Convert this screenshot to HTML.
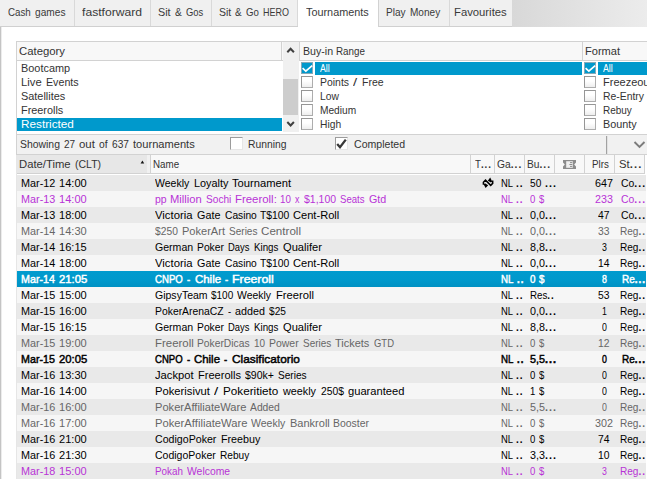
<!DOCTYPE html>
<html><head><meta charset="utf-8"><title>Tournaments</title>
<style>
html,body{margin:0;padding:0;background:#fff;}
body{width:647px;height:479px;overflow:hidden;position:relative;font-family:"Liberation Sans", sans-serif;font-size:11px;}
#app{position:absolute;left:0;top:0;width:647px;height:479px;overflow:hidden;}
#app div,#app svg{position:absolute;}
#app p{margin:0;position:absolute;left:0;top:0;width:0;height:0;}
#app span{position:absolute;white-space:nowrap;line-height:14px;height:14px;transform-origin:0 0;}
#app span.b{-webkit-text-stroke:0.45px currentColor;}
#app span i{font-style:normal;font-weight:bold;letter-spacing:1.1px;}
</style></head><body><div id="app">
<div style="left:512px;top:0px;width:135px;height:27px;background:linear-gradient(90deg,#d8d8d8 0%,#ececec 100%);"></div>
<div style="left:0px;top:27px;width:647px;height:452px;background:#fff;"></div>
<div style="left:0px;top:0px;width:74px;height:26px;background:#f0f0f0;"></div>
<div style="left:74px;top:0px;width:1px;height:26px;background:#d9d9d9;"></div>
<div style="left:0px;top:26px;width:75px;height:1px;background:#d0d0d0;"></div>
<div style="left:75px;top:0px;width:75px;height:26px;background:#f0f0f0;"></div>
<div style="left:150px;top:0px;width:1px;height:26px;background:#d9d9d9;"></div>
<div style="left:75px;top:26px;width:76px;height:1px;background:#d0d0d0;"></div>
<div style="left:151px;top:0px;width:60px;height:26px;background:#f0f0f0;"></div>
<div style="left:211px;top:0px;width:1px;height:26px;background:#d9d9d9;"></div>
<div style="left:151px;top:26px;width:61px;height:1px;background:#d0d0d0;"></div>
<div style="left:212px;top:0px;width:85px;height:26px;background:#f0f0f0;"></div>
<div style="left:297px;top:0px;width:1px;height:26px;background:#d9d9d9;"></div>
<div style="left:212px;top:26px;width:86px;height:1px;background:#d0d0d0;"></div>
<div style="left:298px;top:0px;width:80px;height:27px;background:#fff;"></div>
<div style="left:379px;top:0px;width:70px;height:26px;background:#f0f0f0;"></div>
<div style="left:449px;top:0px;width:1px;height:26px;background:#d9d9d9;"></div>
<div style="left:379px;top:26px;width:71px;height:1px;background:#d0d0d0;"></div>
<div style="left:450px;top:0px;width:62px;height:26px;background:#f0f0f0;"></div>
<div style="left:450px;top:26px;width:62px;height:1px;background:#d0d0d0;"></div>
<div style="left:378px;top:0px;width:1px;height:27px;background:#d2d2d2;"></div>
<div style="left:0px;top:27px;width:1px;height:452px;background:#c4c4c4;"></div>
<div style="left:1px;top:27px;width:1px;height:452px;background:#ececec;"></div>
<div style="left:16px;top:41px;width:631px;height:1px;background:#d2d2d2;"></div>
<div style="left:16px;top:41px;width:1px;height:114px;background:#d2d2d2;"></div>
<div style="left:16px;top:155px;width:1px;height:324px;background:#e6e6e6;"></div>
<div style="left:17px;top:42px;width:630px;height:18px;background:#f8f8f8;"></div>
<div style="left:17px;top:60px;width:630px;height:1px;background:#d2d2d2;"></div>
<div style="left:281px;top:42px;width:1px;height:19px;background:#d2d2d2;"></div>
<div style="left:283px;top:42px;width:16px;height:90px;background:#f0f0f0;"></div>
<div style="left:283px;top:79px;width:15px;height:36px;background:#cdcdcd;"></div>
<div style="left:299px;top:42px;width:1px;height:19px;background:#d2d2d2;"></div>
<div style="left:582px;top:42px;width:1px;height:19px;background:#d2d2d2;"></div>
<div style="left:17px;top:118px;width:265px;height:13px;background:#0099cc;"></div>
<div style="left:315px;top:62px;width:267px;height:13px;background:#0099cc;"></div>
<div style="left:301px;top:62px;width:12px;height:12px;background:#0099cc;box-sizing:border-box;border:1px solid #86a9b8"></div>
<svg style="left:301px;top:62px" width="12" height="12" viewBox="0 0 12 12"><path d="M1.6 6.2 L4.8 9.1 L11.2 3.7" fill="none" stroke="#fff" stroke-width="1.7"/></svg>
<div style="left:301px;top:76px;width:12px;height:12px;background:linear-gradient(#fff 40%,#eee);box-sizing:border-box;border:1px solid #969696;border-right-color:#adadad;border-bottom-color:#adadad"></div>
<div style="left:301px;top:90px;width:12px;height:12px;background:linear-gradient(#fff 40%,#eee);box-sizing:border-box;border:1px solid #969696;border-right-color:#adadad;border-bottom-color:#adadad"></div>
<div style="left:301px;top:104px;width:12px;height:12px;background:linear-gradient(#fff 40%,#eee);box-sizing:border-box;border:1px solid #969696;border-right-color:#adadad;border-bottom-color:#adadad"></div>
<div style="left:301px;top:118px;width:12px;height:12px;background:linear-gradient(#fff 40%,#eee);box-sizing:border-box;border:1px solid #969696;border-right-color:#adadad;border-bottom-color:#adadad"></div>
<div style="left:598px;top:62px;width:49px;height:13px;background:#0099cc;"></div>
<div style="left:584px;top:62px;width:12px;height:12px;background:#0099cc;box-sizing:border-box;border:1px solid #86a9b8"></div>
<svg style="left:584px;top:62px" width="12" height="12" viewBox="0 0 12 12"><path d="M1.6 6.2 L4.8 9.1 L11.2 3.7" fill="none" stroke="#fff" stroke-width="1.7"/></svg>
<div style="left:584px;top:76px;width:12px;height:12px;background:linear-gradient(#fff 40%,#eee);box-sizing:border-box;border:1px solid #969696;border-right-color:#adadad;border-bottom-color:#adadad"></div>
<div style="left:584px;top:90px;width:12px;height:12px;background:linear-gradient(#fff 40%,#eee);box-sizing:border-box;border:1px solid #969696;border-right-color:#adadad;border-bottom-color:#adadad"></div>
<div style="left:584px;top:104px;width:12px;height:12px;background:linear-gradient(#fff 40%,#eee);box-sizing:border-box;border:1px solid #969696;border-right-color:#adadad;border-bottom-color:#adadad"></div>
<div style="left:584px;top:118px;width:12px;height:12px;background:linear-gradient(#fff 40%,#eee);box-sizing:border-box;border:1px solid #969696;border-right-color:#adadad;border-bottom-color:#adadad"></div>
<svg style="left:285px;top:45px" width="12" height="10" viewBox="0 0 12 10"><path d="M2.3 7.3 L5.6 3.8 L8.9 7.3" fill="none" stroke="#404040" stroke-width="2"/></svg>
<svg style="left:285px;top:119px" width="12" height="10" viewBox="0 0 12 10"><path d="M2.3 3 L5.6 6.5 L8.9 3" fill="none" stroke="#404040" stroke-width="2"/></svg>
<div style="left:17px;top:132px;width:630px;height:2px;background:#fff;"></div>
<div style="left:17px;top:134px;width:630px;height:1px;background:#d2d2d2;"></div>
<div style="left:17px;top:135px;width:630px;height:19px;background:#f1f1f1;"></div>
<div style="left:230px;top:137px;width:13px;height:13px;background:#fff;box-sizing:border-box;border:1px solid #9c9c9c;border-right-color:#e6e6e6;border-bottom-color:#e6e6e6"></div>
<div style="left:335px;top:137px;width:13px;height:13px;background:#fff;box-sizing:border-box;border:1px solid #9c9c9c;border-right-color:#e6e6e6;border-bottom-color:#e6e6e6"></div>
<svg style="left:335px;top:137px" width="13" height="13" viewBox="0 0 13 13"><path d="M2.2 7 L5 10.2 L10.8 2.6" fill="none" stroke="#383838" stroke-width="2.3"/></svg>
<div style="left:606px;top:136px;width:1px;height:18px;background:#a2a2a2;"></div>
<div style="left:607px;top:136px;width:1px;height:18px;background:#e2e2e2;"></div>
<svg style="left:633px;top:140px" width="13" height="9" viewBox="0 0 13 9"><path d="M1.5 2 L6.5 7 L11.5 2" fill="none" stroke="#7c7c7c" stroke-width="1.9"/></svg>
<div style="left:17px;top:154px;width:630px;height:1px;background:#d2d2d2;"></div>
<div style="left:17px;top:155px;width:630px;height:18px;background:#f8f8f8;"></div>
<div style="left:17px;top:155px;width:130px;height:18px;background:#e7e7e7;"></div>
<div style="left:147px;top:155px;width:3px;height:18px;background:#f1f1f1;"></div>
<div style="left:17px;top:173px;width:630px;height:1px;background:#d2d2d2;"></div>
<div style="left:17px;top:174px;width:630px;height:1px;background:#fff;"></div>
<div style="left:645px;top:155px;width:2px;height:19px;background:#fff;"></div>
<div style="left:646px;top:174px;width:1px;height:305px;background:#fff;"></div>
<div style="left:150px;top:155px;width:1px;height:18px;background:#d2d2d2;"></div>
<div style="left:470px;top:155px;width:1px;height:18px;background:#d2d2d2;"></div>
<div style="left:494px;top:155px;width:1px;height:18px;background:#d2d2d2;"></div>
<div style="left:524px;top:155px;width:1px;height:18px;background:#d2d2d2;"></div>
<div style="left:554px;top:155px;width:1px;height:18px;background:#d2d2d2;"></div>
<div style="left:584px;top:155px;width:1px;height:18px;background:#d2d2d2;"></div>
<div style="left:614px;top:155px;width:1px;height:18px;background:#d2d2d2;"></div>
<div style="left:644px;top:155px;width:1px;height:18px;background:#d2d2d2;"></div>
<svg style="left:140px;top:160px" width="5" height="4" viewBox="0 0 5 4"><path d="M0.6 3.6 L2.4 0.6 L4.2 3.6 Z" fill="#111"/></svg>
<svg style="left:563px;top:160px" width="13" height="9" viewBox="0 0 13 9"><path d="M0 0 H13 V2.6 L11.2 4.5 L13 6.4 V9 H0 V6.4 L1.8 4.5 L0 2.6 Z" fill="#8c8c8c"/><rect x="3.2" y="1.2" width="6.6" height="6.6" fill="#efefef"/><rect x="7" y="2.1" width="2.3" height="1" fill="#8c8c8c"/><rect x="6.4" y="4" width="2.9" height="1" fill="#8c8c8c"/><rect x="7" y="5.9" width="2.3" height="1" fill="#8c8c8c"/></svg>
<div style="left:17px;top:175px;width:629px;height:16px;background:#e9e9e9;"></div>
<div style="left:17px;top:191px;width:629px;height:16px;background:#f6f6f6;"></div>
<div style="left:17px;top:207px;width:629px;height:16px;background:#e9e9e9;"></div>
<div style="left:17px;top:223px;width:629px;height:16px;background:#f6f6f6;"></div>
<div style="left:17px;top:239px;width:629px;height:16px;background:#e9e9e9;"></div>
<div style="left:17px;top:255px;width:629px;height:16px;background:#f6f6f6;"></div>
<div style="left:17px;top:271px;width:629px;height:16px;background:linear-gradient(#019bce 0%,#0099cc 55%,#0091c3 100%);"></div>
<div style="left:17px;top:287px;width:629px;height:16px;background:#f6f6f6;"></div>
<div style="left:17px;top:303px;width:629px;height:16px;background:#e9e9e9;"></div>
<div style="left:17px;top:319px;width:629px;height:16px;background:#f6f6f6;"></div>
<div style="left:17px;top:335px;width:629px;height:16px;background:#e9e9e9;"></div>
<div style="left:17px;top:351px;width:629px;height:16px;background:#f6f6f6;"></div>
<div style="left:17px;top:367px;width:629px;height:16px;background:#e9e9e9;"></div>
<div style="left:17px;top:383px;width:629px;height:16px;background:#f6f6f6;"></div>
<div style="left:17px;top:399px;width:629px;height:16px;background:#e9e9e9;"></div>
<div style="left:17px;top:415px;width:629px;height:16px;background:#f6f6f6;"></div>
<div style="left:17px;top:431px;width:629px;height:16px;background:#e9e9e9;"></div>
<div style="left:17px;top:447px;width:629px;height:16px;background:#f6f6f6;"></div>
<div style="left:17px;top:463px;width:629px;height:16px;background:#e9e9e9;"></div>
<svg style="left:478px;top:173px" width="20" height="20" viewBox="0 0 20 20"><path d="M5.4 11.8 V9.2 L7.5 7.1 L12.7 12.4 L14.7 10.4 V7.6" fill="none" stroke="#000" stroke-width="1.5"/><path d="M12.2 4.6 L14.2 8.4 L13 9.4 L9.8 7.7 Z M7.6 15.1 L5.7 11.4 L6.9 10.3 L10.2 12.2 Z" fill="#000"/></svg>
<p><span style="left:8.30px;top:5px;color:#3a3a3a;transform:scaleX(0.8875);">Cash</span> <span style="left:34.97px;top:5px;color:#3a3a3a;transform:scaleX(0.9223);">games</span></p>
<p><span style="left:82.40px;top:5px;color:#3a3a3a;transform:scaleX(1.1049);">fastforward</span></p>
<p><span style="left:158.10px;top:5px;color:#3a3a3a;transform:scaleX(0.9800);">Sit</span> <span style="left:174.63px;top:5px;color:#3a3a3a;transform:scaleX(0.9216);">&amp;</span> <span style="left:186.01px;top:5px;color:#3a3a3a;transform:scaleX(0.8549);">Gos</span></p>
<p><span style="left:218.80px;top:5px;color:#3a3a3a;transform:scaleX(0.9536);">Sit</span> <span style="left:234.91px;top:5px;color:#3a3a3a;transform:scaleX(0.8959);">&amp;</span> <span style="left:246.00px;top:5px;color:#3a3a3a;transform:scaleX(0.8755);">Go</span> <span style="left:262.67px;top:5px;color:#3a3a3a;transform:scaleX(0.8171);">HERO</span></p>
<p><span style="left:306.00px;top:5px;color:#3a3a3a;transform:scaleX(0.9861);">Tournaments</span></p>
<p><span style="left:386.30px;top:5px;color:#3a3a3a;transform:scaleX(0.9152);">Play</span> <span style="left:410.27px;top:5px;color:#3a3a3a;transform:scaleX(0.9135);">Money</span></p>
<p><span style="left:453.50px;top:5px;color:#3a3a3a;transform:scaleX(1.0259);">Favourites</span></p>
<p><span style="left:19.00px;top:44px;color:#333;transform:scaleX(1.0301);">Category</span></p>
<p><span style="left:302.50px;top:44px;color:#333;transform:scaleX(0.9646);">Buy-in</span> <span style="left:336.35px;top:44px;color:#333;transform:scaleX(0.8930);">Range</span></p>
<p><span style="left:585.20px;top:44px;color:#333;transform:scaleX(1.0061);">Format</span></p>
<p><span style="left:21.00px;top:61px;color:#333;transform:scaleX(0.9916);">Bootcamp</span></p>
<p><span style="left:21.00px;top:75px;color:#333;transform:scaleX(1.0224);">Live</span> <span style="left:45.60px;top:75px;color:#333;transform:scaleX(0.9710);">Events</span></p>
<p><span style="left:21.00px;top:89px;color:#333;transform:scaleX(0.9913);">Satellites</span></p>
<p><span style="left:21.00px;top:103px;color:#333;transform:scaleX(0.9874);">Freerolls</span></p>
<p><span style="left:21.00px;top:117px;color:#fff;transform:scaleX(1.0675);">Restricted</span></p>
<p><span style="left:319.80px;top:61px;color:#fff;transform:scaleX(0.7973);">All</span></p>
<p><span style="left:319.80px;top:75px;color:#333;transform:scaleX(0.9485);">Points</span> <span style="left:353.10px;top:75px;color:#333;transform:scaleX(1.3427);">/</span> <span style="left:362.30px;top:75px;color:#333;transform:scaleX(0.9554);">Free</span></p>
<p><span style="left:319.80px;top:89px;color:#333;transform:scaleX(0.9386);">Low</span></p>
<p><span style="left:319.80px;top:103px;color:#333;transform:scaleX(0.9240);">Medium</span></p>
<p><span style="left:319.80px;top:117px;color:#333;transform:scaleX(0.9330);">High</span></p>
<p><span style="left:602.50px;top:61px;color:#fff;transform:scaleX(0.7973);">All</span></p>
<p><span style="left:602.50px;top:75px;color:#333;transform:scaleX(1.0005);">Freezeout</span></p>
<p><span style="left:602.50px;top:89px;color:#333;transform:scaleX(0.9452);">Re-Entry</span></p>
<p><span style="left:602.50px;top:103px;color:#333;transform:scaleX(0.9072);">Rebuy</span></p>
<p><span style="left:602.50px;top:117px;color:#333;transform:scaleX(0.9842);">Bounty</span></p>
<p><span style="left:20.00px;top:137px;color:#333;transform:scaleX(0.9465);">Showing</span> <span style="left:63.78px;top:137px;color:#333;transform:scaleX(0.9098);">27</span> <span style="left:78.76px;top:137px;color:#333;transform:scaleX(1.0383);">out</span> <span style="left:98.52px;top:137px;color:#333;transform:scaleX(0.9349);">of</span> <span style="left:111.94px;top:137px;color:#333;transform:scaleX(0.9241);">637</span> <span style="left:132.74px;top:137px;color:#333;transform:scaleX(1.0099);">tournaments</span></p>
<p><span style="left:248.30px;top:137px;color:#333;transform:scaleX(0.9396);">Running</span></p>
<p><span style="left:353.70px;top:137px;color:#333;transform:scaleX(0.9607);">Completed</span></p>
<p><span style="left:19.25px;top:157px;color:#333;transform:scaleX(1.0256);">Date/Time</span> <span style="left:74.58px;top:157px;color:#333;transform:scaleX(0.9543);">(CLT)</span></p>
<p><span style="left:153.30px;top:157px;color:#333;transform:scaleX(0.8896);">Name</span></p>
<p><span style="left:475.20px;top:157px;color:#333;transform:scaleX(0.8810);">T<i>...</i></span></p>
<p><span style="left:497.00px;top:157px;color:#333;transform:scaleX(0.9308);">Ga<i>...</i></span></p>
<p><span style="left:527.40px;top:157px;color:#333;transform:scaleX(0.9281);">Bu<i>...</i></span></p>
<p><span style="left:591.50px;top:157px;color:#333;transform:scaleX(0.8893);">Plrs</span></p>
<p><span style="left:619.00px;top:157px;color:#333;transform:scaleX(1.0268);">St<i>...</i></span></p>
<p><span style="left:21.00px;top:176px;color:#000;transform:scaleX(0.9832);">Mar-12</span> <span style="left:59.18px;top:176px;color:#000;transform:scaleX(1.0056);">14:00</span></p>
<p><span style="left:155.00px;top:176px;color:#000;transform:scaleX(0.9562);">Weekly</span> <span style="left:193.68px;top:176px;color:#000;transform:scaleX(0.9871);">Loyalty</span> <span style="left:232.47px;top:176px;color:#000;transform:scaleX(1.0154);">Tournament</span></p>
<p><span style="left:500.60px;top:176px;color:#000;transform:scaleX(0.8568);">NL</span> <span style="left:516.43px;top:176px;color:#000;transform:scaleX(0.9179);"><i>..</i></span></p>
<p><span style="left:529.60px;top:176px;color:#000;transform:scaleX(0.9201);">50</span> <span style="left:544.68px;top:176px;color:#000;transform:scaleX(0.9656);"><i>...</i></span></p>
<p><span style="left:595.10px;top:176px;color:#000;transform:scaleX(0.9758);">647</span></p>
<p><span style="left:621.00px;top:176px;color:#000;transform:scaleX(0.9458);">Co<i>...</i></span></p>
<p><span style="left:21.00px;top:192px;color:#b833d6;transform:scaleX(0.9832);">Mar-13</span> <span style="left:59.18px;top:192px;color:#b833d6;transform:scaleX(1.0056);">14:00</span></p>
<p><span style="left:155.00px;top:192px;color:#b833d6;transform:scaleX(0.9513);">pp</span> <span style="left:170.42px;top:192px;color:#b833d6;transform:scaleX(1.0162);">Million</span> <span style="left:205.88px;top:192px;color:#b833d6;transform:scaleX(0.9210);">Sochi</span> <span style="left:234.70px;top:192px;color:#b833d6;transform:scaleX(1.0367);">Freeroll:</span> <span style="left:280.35px;top:192px;color:#b833d6;transform:scaleX(0.8920);">10</span> <span style="left:295.05px;top:192px;color:#b833d6;transform:scaleX(0.8101);">x</span> <span style="left:303.79px;top:192px;color:#b833d6;transform:scaleX(0.9528);">$1,100</span> <span style="left:339.63px;top:192px;color:#b833d6;transform:scaleX(0.8741);">Seats</span> <span style="left:368.55px;top:192px;color:#b833d6;transform:scaleX(0.9738);">Gtd</span></p>
<p><span style="left:500.60px;top:192px;color:#b833d6;transform:scaleX(0.8568);">NL</span> <span style="left:516.43px;top:192px;color:#b833d6;transform:scaleX(0.9179);"><i>..</i></span></p>
<p><span style="left:529.60px;top:192px;color:#b833d6;transform:scaleX(0.8700);">0</span> <span style="left:538.77px;top:192px;color:#b833d6;transform:scaleX(0.8700);">$</span></p>
<p><span style="left:595.10px;top:192px;color:#b833d6;transform:scaleX(0.9758);">233</span></p>
<p><span style="left:621.00px;top:192px;color:#b833d6;transform:scaleX(0.9458);">Co<i>...</i></span></p>
<p><span style="left:21.00px;top:208px;color:#000;transform:scaleX(0.9832);">Mar-13</span> <span style="left:59.18px;top:208px;color:#000;transform:scaleX(1.0056);">18:00</span></p>
<p><span style="left:155.00px;top:208px;color:#000;transform:scaleX(1.0283);">Victoria</span> <span style="left:197.38px;top:208px;color:#000;transform:scaleX(0.9809);">Gate</span> <span style="left:224.63px;top:208px;color:#000;transform:scaleX(0.9287);">Casino</span> <span style="left:260.28px;top:208px;color:#000;transform:scaleX(0.9411);">T$100</span> <span style="left:293.49px;top:208px;color:#000;transform:scaleX(1.0086);">Cent-Roll</span></p>
<p><span style="left:500.60px;top:208px;color:#000;transform:scaleX(0.8568);">NL</span> <span style="left:516.43px;top:208px;color:#000;transform:scaleX(0.9179);"><i>..</i></span></p>
<p><span style="left:529.60px;top:208px;color:#000;transform:scaleX(0.9771);">0,0<i>...</i></span></p>
<p><span style="left:598.30px;top:208px;color:#000;transform:scaleX(0.9396);">47</span></p>
<p><span style="left:621.00px;top:208px;color:#000;transform:scaleX(0.9458);">Co<i>...</i></span></p>
<p><span style="left:21.00px;top:224px;color:#666;transform:scaleX(0.9832);">Mar-14</span> <span style="left:59.18px;top:224px;color:#666;transform:scaleX(1.0056);">14:30</span></p>
<p><span style="left:155.00px;top:224px;color:#666;transform:scaleX(0.9338);">$250</span> <span style="left:181.71px;top:224px;color:#666;transform:scaleX(1.0047);">PokerArt</span> <span style="left:228.60px;top:224px;color:#666;transform:scaleX(0.9128);">Series</span> <span style="left:261.48px;top:224px;color:#666;transform:scaleX(1.0549);">Centroll</span></p>
<p><span style="left:500.60px;top:224px;color:#666;transform:scaleX(0.8568);">NL</span> <span style="left:516.43px;top:224px;color:#666;transform:scaleX(0.9179);"><i>..</i></span></p>
<p><span style="left:529.60px;top:224px;color:#666;transform:scaleX(0.9771);">0,0<i>...</i></span></p>
<p><span style="left:598.30px;top:224px;color:#666;transform:scaleX(0.9396);">33</span></p>
<p><span style="left:619.50px;top:224px;color:#666;transform:scaleX(0.9143);">Reg<i>..</i></span></p>
<p><span style="left:21.00px;top:240px;color:#000;transform:scaleX(0.9832);">Mar-14</span> <span style="left:59.18px;top:240px;color:#000;transform:scaleX(1.0056);">16:15</span></p>
<p><span style="left:155.00px;top:240px;color:#000;transform:scaleX(0.9598);">German</span> <span style="left:196.95px;top:240px;color:#000;transform:scaleX(0.9378);">Poker</span> <span style="left:228.14px;top:240px;color:#000;transform:scaleX(0.8531);">Days</span> <span style="left:253.86px;top:240px;color:#000;transform:scaleX(0.8871);">Kings</span> <span style="left:282.64px;top:240px;color:#000;transform:scaleX(1.0127);">Qualifer</span></p>
<p><span style="left:500.60px;top:240px;color:#000;transform:scaleX(0.8568);">NL</span> <span style="left:516.43px;top:240px;color:#000;transform:scaleX(0.9179);"><i>..</i></span></p>
<p><span style="left:529.60px;top:240px;color:#000;transform:scaleX(0.9771);">8,8<i>...</i></span></p>
<p><span style="left:601.60px;top:240px;color:#000;transform:scaleX(0.7990);">3</span></p>
<p><span style="left:619.50px;top:240px;color:#000;transform:scaleX(0.9143);">Reg<i>..</i></span></p>
<p><span style="left:21.00px;top:256px;color:#000;transform:scaleX(0.9832);">Mar-14</span> <span style="left:59.18px;top:256px;color:#000;transform:scaleX(1.0056);">18:00</span></p>
<p><span style="left:155.00px;top:256px;color:#000;transform:scaleX(1.0283);">Victoria</span> <span style="left:197.38px;top:256px;color:#000;transform:scaleX(0.9809);">Gate</span> <span style="left:224.63px;top:256px;color:#000;transform:scaleX(0.9287);">Casino</span> <span style="left:260.28px;top:256px;color:#000;transform:scaleX(0.9411);">T$100</span> <span style="left:293.49px;top:256px;color:#000;transform:scaleX(1.0086);">Cent-Roll</span></p>
<p><span style="left:500.60px;top:256px;color:#000;transform:scaleX(0.8568);">NL</span> <span style="left:516.43px;top:256px;color:#000;transform:scaleX(0.9179);"><i>..</i></span></p>
<p><span style="left:529.60px;top:256px;color:#000;transform:scaleX(0.9771);">0,0<i>...</i></span></p>
<p><span style="left:598.30px;top:256px;color:#000;transform:scaleX(0.9396);">14</span></p>
<p><span style="left:619.50px;top:256px;color:#000;transform:scaleX(0.9143);">Reg<i>..</i></span></p>
<p><span class="b" style="left:21.00px;top:272px;color:#fff;transform:scaleX(0.9735);">Mar-14</span> <span class="b" style="left:58.60px;top:272px;color:#fff;transform:scaleX(1.0270);">21:05</span></p>
<p><span class="b" style="left:155.00px;top:272px;color:#fff;transform:scaleX(0.8738);">CNPO</span> <span class="b" style="left:187.13px;top:272px;color:#fff;transform:scaleX(0.8752);">-</span> <span class="b" style="left:194.61px;top:272px;color:#fff;transform:scaleX(1.0398);">Chile</span> <span class="b" style="left:224.53px;top:272px;color:#fff;transform:scaleX(0.8752);">-</span> <span class="b" style="left:232.01px;top:272px;color:#fff;transform:scaleX(1.1204);">Freeroll</span></p>
<p><span class="b" style="left:500.60px;top:272px;color:#fff;transform:scaleX(0.8842);">NL</span> <span class="b" style="left:516.75px;top:272px;color:#fff;transform:scaleX(0.8738);"><i>..</i></span></p>
<p><span class="b" style="left:529.60px;top:272px;color:#fff;transform:scaleX(0.8935);">0</span> <span class="b" style="left:538.63px;top:272px;color:#fff;transform:scaleX(0.8935);">$</span></p>
<p><span class="b" style="left:601.60px;top:272px;color:#fff;transform:scaleX(0.7990);">8</span></p>
<p><span class="b" style="left:622.30px;top:272px;color:#fff;transform:scaleX(0.9064);">Re<i>...</i></span></p>
<p><span style="left:21.00px;top:288px;color:#000;transform:scaleX(0.9832);">Mar-15</span> <span style="left:59.18px;top:288px;color:#000;transform:scaleX(1.0056);">15:00</span></p>
<p><span style="left:155.00px;top:288px;color:#000;transform:scaleX(0.9565);">GipsyTeam</span> <span style="left:211.34px;top:288px;color:#000;transform:scaleX(0.9078);">$100</span> <span style="left:237.33px;top:288px;color:#000;transform:scaleX(0.9472);">Weekly</span> <span style="left:275.64px;top:288px;color:#000;transform:scaleX(1.0191);">Freeroll</span></p>
<p><span style="left:500.60px;top:288px;color:#000;transform:scaleX(0.8568);">NL</span> <span style="left:516.43px;top:288px;color:#000;transform:scaleX(0.9179);"><i>..</i></span></p>
<p><span style="left:529.60px;top:288px;color:#000;transform:scaleX(0.8870);">Res<i>..</i></span></p>
<p><span style="left:598.30px;top:288px;color:#000;transform:scaleX(0.9396);">53</span></p>
<p><span style="left:619.50px;top:288px;color:#000;transform:scaleX(0.9143);">Reg<i>..</i></span></p>
<p><span style="left:21.00px;top:304px;color:#000;transform:scaleX(0.9832);">Mar-15</span> <span style="left:59.18px;top:304px;color:#000;transform:scaleX(1.0056);">16:00</span></p>
<p><span style="left:155.00px;top:304px;color:#000;transform:scaleX(0.9438);">PokerArenaCZ</span> <span style="left:227.87px;top:304px;color:#000;transform:scaleX(0.8647);">-</span> <span style="left:235.28px;top:304px;color:#000;transform:scaleX(0.9769);">added</span> <span style="left:268.98px;top:304px;color:#000;transform:scaleX(0.9220);">$25</span></p>
<p><span style="left:500.60px;top:304px;color:#000;transform:scaleX(0.8568);">NL</span> <span style="left:516.43px;top:304px;color:#000;transform:scaleX(0.9179);"><i>..</i></span></p>
<p><span style="left:529.60px;top:304px;color:#000;transform:scaleX(0.9771);">0,0<i>...</i></span></p>
<p><span style="left:601.60px;top:304px;color:#000;transform:scaleX(0.7990);">1</span></p>
<p><span style="left:619.50px;top:304px;color:#000;transform:scaleX(0.9143);">Reg<i>..</i></span></p>
<p><span style="left:21.00px;top:320px;color:#000;transform:scaleX(0.9832);">Mar-15</span> <span style="left:59.18px;top:320px;color:#000;transform:scaleX(1.0056);">16:15</span></p>
<p><span style="left:155.00px;top:320px;color:#000;transform:scaleX(0.9598);">German</span> <span style="left:196.95px;top:320px;color:#000;transform:scaleX(0.9378);">Poker</span> <span style="left:228.14px;top:320px;color:#000;transform:scaleX(0.8531);">Days</span> <span style="left:253.86px;top:320px;color:#000;transform:scaleX(0.8871);">Kings</span> <span style="left:282.64px;top:320px;color:#000;transform:scaleX(1.0127);">Qualifer</span></p>
<p><span style="left:500.60px;top:320px;color:#000;transform:scaleX(0.8568);">NL</span> <span style="left:516.43px;top:320px;color:#000;transform:scaleX(0.9179);"><i>..</i></span></p>
<p><span style="left:529.60px;top:320px;color:#000;transform:scaleX(0.9771);">8,8<i>...</i></span></p>
<p><span style="left:601.60px;top:320px;color:#000;transform:scaleX(0.7990);">0</span></p>
<p><span style="left:619.50px;top:320px;color:#000;transform:scaleX(0.9143);">Reg<i>..</i></span></p>
<p><span style="left:21.00px;top:336px;color:#666;transform:scaleX(0.9832);">Mar-15</span> <span style="left:59.18px;top:336px;color:#666;transform:scaleX(1.0056);">19:00</span></p>
<p><span style="left:155.00px;top:336px;color:#666;transform:scaleX(1.0380);">Freeroll</span> <span style="left:197.18px;top:336px;color:#666;transform:scaleX(0.9339);">PokerDicas</span> <span style="left:254.10px;top:336px;color:#666;transform:scaleX(0.9040);">10</span> <span style="left:268.99px;top:336px;color:#666;transform:scaleX(0.9519);">Power</span> <span style="left:302.92px;top:336px;color:#666;transform:scaleX(0.9042);">Series</span> <span style="left:335.49px;top:336px;color:#666;transform:scaleX(0.9973);">Tickets</span> <span style="left:374.26px;top:336px;color:#666;transform:scaleX(0.8605);">GTD</span></p>
<p><span style="left:500.60px;top:336px;color:#666;transform:scaleX(0.8568);">NL</span> <span style="left:516.43px;top:336px;color:#666;transform:scaleX(0.9179);"><i>..</i></span></p>
<p><span style="left:529.60px;top:336px;color:#666;transform:scaleX(0.8700);">0</span> <span style="left:538.77px;top:336px;color:#666;transform:scaleX(0.8700);">$</span></p>
<p><span style="left:598.30px;top:336px;color:#666;transform:scaleX(0.9396);">12</span></p>
<p><span style="left:619.50px;top:336px;color:#666;transform:scaleX(0.9143);">Reg<i>..</i></span></p>
<p><span class="b" style="left:21.00px;top:352px;color:#000;transform:scaleX(0.9735);">Mar-15</span> <span class="b" style="left:58.60px;top:352px;color:#000;transform:scaleX(1.0270);">20:05</span></p>
<p><span class="b" style="left:155.00px;top:352px;color:#000;transform:scaleX(0.8704);">CNPO</span> <span class="b" style="left:187.01px;top:352px;color:#000;transform:scaleX(0.8713);">-</span> <span class="b" style="left:194.46px;top:352px;color:#000;transform:scaleX(1.0358);">Chile</span> <span class="b" style="left:224.27px;top:352px;color:#000;transform:scaleX(0.8713);">-</span> <span class="b" style="left:231.72px;top:352px;color:#000;transform:scaleX(1.0785);">Clasificatorio</span></p>
<p><span class="b" style="left:500.60px;top:352px;color:#000;transform:scaleX(0.8842);">NL</span> <span class="b" style="left:516.75px;top:352px;color:#000;transform:scaleX(0.8738);"><i>..</i></span></p>
<p><span class="b" style="left:529.60px;top:352px;color:#000;transform:scaleX(0.9771);">5,5<i>...</i></span></p>
<p><span class="b" style="left:601.60px;top:352px;color:#000;transform:scaleX(0.7990);">0</span></p>
<p><span class="b" style="left:622.30px;top:352px;color:#000;transform:scaleX(0.9064);">Re<i>...</i></span></p>
<p><span style="left:21.00px;top:368px;color:#000;transform:scaleX(0.9832);">Mar-16</span> <span style="left:59.18px;top:368px;color:#000;transform:scaleX(1.0056);">13:30</span></p>
<p><span style="left:155.00px;top:368px;color:#000;transform:scaleX(1.0190);">Jackpot</span> <span style="left:197.56px;top:368px;color:#000;transform:scaleX(1.0036);">Freerolls</span> <span style="left:244.99px;top:368px;color:#000;transform:scaleX(0.9573);">$90k+</span> <span style="left:277.56px;top:368px;color:#000;transform:scaleX(0.9197);">Series</span></p>
<p><span style="left:500.60px;top:368px;color:#000;transform:scaleX(0.8568);">NL</span> <span style="left:516.43px;top:368px;color:#000;transform:scaleX(0.9179);"><i>..</i></span></p>
<p><span style="left:529.60px;top:368px;color:#000;transform:scaleX(0.8700);">0</span> <span style="left:538.77px;top:368px;color:#000;transform:scaleX(0.8700);">$</span></p>
<p><span style="left:601.60px;top:368px;color:#000;transform:scaleX(0.7990);">0</span></p>
<p><span style="left:619.50px;top:368px;color:#000;transform:scaleX(0.9143);">Reg<i>..</i></span></p>
<p><span style="left:21.00px;top:384px;color:#000;transform:scaleX(0.9832);">Mar-16</span> <span style="left:59.18px;top:384px;color:#000;transform:scaleX(1.0056);">14:00</span></p>
<p><span style="left:155.00px;top:384px;color:#000;transform:scaleX(1.0203);">Pokerisivut</span> <span style="left:213.71px;top:384px;color:#000;transform:scaleX(1.3678);">/</span> <span style="left:223.07px;top:384px;color:#000;transform:scaleX(1.0652);">Pokeritieto</span> <span style="left:283.27px;top:384px;color:#000;transform:scaleX(0.9815);">weekly</span> <span style="left:320.75px;top:384px;color:#000;transform:scaleX(0.9406);">250$</span> <span style="left:347.64px;top:384px;color:#000;transform:scaleX(1.0145);">guaranteed</span></p>
<p><span style="left:500.60px;top:384px;color:#000;transform:scaleX(0.8568);">NL</span> <span style="left:516.43px;top:384px;color:#000;transform:scaleX(0.9179);"><i>..</i></span></p>
<p><span style="left:529.60px;top:384px;color:#000;transform:scaleX(0.8700);">1</span> <span style="left:538.77px;top:384px;color:#000;transform:scaleX(0.8700);">$</span></p>
<p><span style="left:601.60px;top:384px;color:#000;transform:scaleX(0.7990);">0</span></p>
<p><span style="left:619.50px;top:384px;color:#000;transform:scaleX(0.9143);">Reg<i>..</i></span></p>
<p><span style="left:21.00px;top:400px;color:#666;transform:scaleX(0.9832);">Mar-16</span> <span style="left:59.18px;top:400px;color:#666;transform:scaleX(1.0056);">16:00</span></p>
<p><span style="left:155.00px;top:400px;color:#666;transform:scaleX(1.0097);">PokerAffiliateWare</span> <span style="left:250.10px;top:400px;color:#666;transform:scaleX(0.9371);">Added</span></p>
<p><span style="left:500.60px;top:400px;color:#666;transform:scaleX(0.8568);">NL</span> <span style="left:516.43px;top:400px;color:#666;transform:scaleX(0.9179);"><i>..</i></span></p>
<p><span style="left:529.60px;top:400px;color:#666;transform:scaleX(0.9771);">5,5<i>...</i></span></p>
<p><span style="left:601.60px;top:400px;color:#666;transform:scaleX(0.7990);">0</span></p>
<p><span style="left:619.50px;top:400px;color:#666;transform:scaleX(0.9143);">Reg<i>..</i></span></p>
<p><span style="left:21.00px;top:416px;color:#666;transform:scaleX(0.9832);">Mar-16</span> <span style="left:59.18px;top:416px;color:#666;transform:scaleX(1.0056);">17:00</span></p>
<p><span style="left:155.00px;top:416px;color:#666;transform:scaleX(1.0219);">PokerAffiliateWare</span> <span style="left:251.23px;top:416px;color:#666;transform:scaleX(0.9551);">Weekly</span> <span style="left:289.86px;top:416px;color:#666;transform:scaleX(1.0015);">Bankroll</span> <span style="left:333.12px;top:416px;color:#666;transform:scaleX(0.9483);">Booster</span></p>
<p><span style="left:500.60px;top:416px;color:#666;transform:scaleX(0.8568);">NL</span> <span style="left:516.43px;top:416px;color:#666;transform:scaleX(0.9179);"><i>..</i></span></p>
<p><span style="left:529.60px;top:416px;color:#666;transform:scaleX(0.8700);">0</span> <span style="left:538.77px;top:416px;color:#666;transform:scaleX(0.8700);">$</span></p>
<p><span style="left:595.10px;top:416px;color:#666;transform:scaleX(0.9758);">302</span></p>
<p><span style="left:619.50px;top:416px;color:#666;transform:scaleX(0.9143);">Reg<i>..</i></span></p>
<p><span style="left:21.00px;top:432px;color:#000;transform:scaleX(0.9832);">Mar-16</span> <span style="left:59.18px;top:432px;color:#000;transform:scaleX(1.0056);">21:00</span></p>
<p><span style="left:155.00px;top:432px;color:#000;transform:scaleX(0.9651);">CodigoPoker</span> <span style="left:220.68px;top:432px;color:#000;transform:scaleX(0.9745);">Freebuy</span></p>
<p><span style="left:500.60px;top:432px;color:#000;transform:scaleX(0.8568);">NL</span> <span style="left:516.43px;top:432px;color:#000;transform:scaleX(0.9179);"><i>..</i></span></p>
<p><span style="left:529.60px;top:432px;color:#000;transform:scaleX(0.8700);">0</span> <span style="left:538.77px;top:432px;color:#000;transform:scaleX(0.8700);">$</span></p>
<p><span style="left:598.30px;top:432px;color:#000;transform:scaleX(0.9396);">74</span></p>
<p><span style="left:619.50px;top:432px;color:#000;transform:scaleX(0.9143);">Reg<i>..</i></span></p>
<p><span style="left:21.00px;top:448px;color:#000;transform:scaleX(0.9832);">Mar-16</span> <span style="left:59.18px;top:448px;color:#000;transform:scaleX(1.0056);">21:30</span></p>
<p><span style="left:155.00px;top:448px;color:#000;transform:scaleX(0.9555);">CodigoPoker</span> <span style="left:220.03px;top:448px;color:#000;transform:scaleX(0.9187);">Rebuy</span></p>
<p><span style="left:500.60px;top:448px;color:#000;transform:scaleX(0.8568);">NL</span> <span style="left:516.43px;top:448px;color:#000;transform:scaleX(0.9179);"><i>..</i></span></p>
<p><span style="left:529.60px;top:448px;color:#000;transform:scaleX(0.9771);">3,3<i>...</i></span></p>
<p><span style="left:598.30px;top:448px;color:#000;transform:scaleX(0.9396);">10</span></p>
<p><span style="left:619.50px;top:448px;color:#000;transform:scaleX(0.9143);">Reg<i>..</i></span></p>
<p><span style="left:21.00px;top:464px;color:#b833d6;transform:scaleX(0.9832);">Mar-18</span> <span style="left:59.18px;top:464px;color:#b833d6;transform:scaleX(1.0056);">15:00</span></p>
<p><span style="left:155.00px;top:464px;color:#b833d6;transform:scaleX(0.8943);">Pokah</span> <span style="left:186.60px;top:464px;color:#b833d6;transform:scaleX(0.9442);">Welcome</span></p>
<p><span style="left:500.60px;top:464px;color:#b833d6;transform:scaleX(0.8568);">NL</span> <span style="left:516.43px;top:464px;color:#b833d6;transform:scaleX(0.9179);"><i>..</i></span></p>
<p><span style="left:529.60px;top:464px;color:#b833d6;transform:scaleX(0.8700);">0</span> <span style="left:538.77px;top:464px;color:#b833d6;transform:scaleX(0.8700);">$</span></p>
<p><span style="left:601.60px;top:464px;color:#b833d6;transform:scaleX(0.7990);">3</span></p>
<p><span style="left:619.50px;top:464px;color:#b833d6;transform:scaleX(0.9143);">Reg<i>..</i></span></p>
</div></body></html>
